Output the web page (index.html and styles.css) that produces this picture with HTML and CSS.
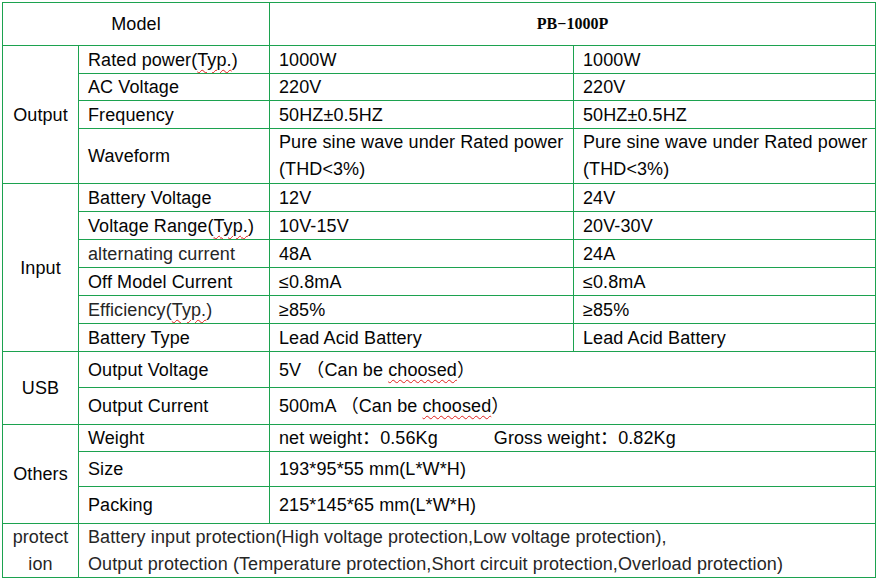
FILE: index.html
```html
<!DOCTYPE html>
<html lang="en">
<head>
<meta charset="utf-8">
<title>PB-1000P specification</title>
<link rel="stylesheet" href="styles.css">
</head>
<body>
<div class="spec">
  <div class="c span2 center"><span>Model</span></div>
  <div class="c span2 center model"><span>PB−1000P</span></div>

  <div class="c grp r4"><span>Output</span></div>
  <div class="c"><span>Rated power(<span class="sp">Typ.</span>)</span></div>
  <div class="c"><span>1000W</span></div>
  <div class="c"><span>1000W</span></div>
  <div class="c"><span>AC Voltage</span></div>
  <div class="c"><span>220V</span></div>
  <div class="c"><span>220V</span></div>
  <div class="c"><span>Frequency</span></div>
  <div class="c"><span>50HZ±0.5HZ</span></div>
  <div class="c"><span>50HZ±0.5HZ</span></div>
  <div class="c"><span>Waveform</span></div>
  <div class="c multi"><span>Pure sine wave under Rated power<br>(THD&lt;3%)</span></div>
  <div class="c multi"><span>Pure sine wave under Rated power<br>(THD&lt;3%)</span></div>

  <div class="c grp r6"><span>Input</span></div>
  <div class="c"><span>Battery Voltage</span></div>
  <div class="c"><span>12V</span></div>
  <div class="c"><span>24V</span></div>
  <div class="c"><span>Voltage Range(<span class="sp">Typ.</span>)</span></div>
  <div class="c"><span>10V-15V</span></div>
  <div class="c"><span>20V-30V</span></div>
  <div class="c soft"><span>alternating current</span></div>
  <div class="c"><span>48A</span></div>
  <div class="c"><span>24A</span></div>
  <div class="c"><span>Off Model Current</span></div>
  <div class="c"><span>≤0.8mA</span></div>
  <div class="c"><span>≤0.8mA</span></div>
  <div class="c soft"><span>Efficiency(<span class="sp">Typ.</span>)</span></div>
  <div class="c"><span>≥85%</span></div>
  <div class="c"><span>≥85%</span></div>
  <div class="c"><span>Battery Type</span></div>
  <div class="c"><span>Lead Acid Battery</span></div>
  <div class="c"><span>Lead Acid Battery</span></div>

  <div class="c grp r2"><span>USB</span></div>
  <div class="c"><span>Output Voltage</span></div>
  <div class="c span2"><span>5V （Can be <span class="sp">choosed</span>）</span></div>
  <div class="c"><span>Output Current</span></div>
  <div class="c span2"><span>500mA （Can be <span class="sp">choosed</span>）</span></div>

  <div class="c grp r3"><span>Others</span></div>
  <div class="c"><span>Weight</span></div>
  <div class="c span2"><span>net weight：0.56Kg</span><span class="gross">Gross weight：0.82Kg</span></div>
  <div class="c"><span>Size</span></div>
  <div class="c span2"><span>193*95*55 mm(L*W*H)</span></div>
  <div class="c"><span>Packing</span></div>
  <div class="c span2"><span>215*145*65 mm(L*W*H)</span></div>

  <div class="c grp multi soft"><span>protect<br>ion</span></div>
  <div class="c span3 multi soft"><span>Battery input protection(High voltage protection,Low voltage protection),<br>Output protection (Temperature protection,Short circuit protection,Overload protection)</span></div>
</div>
</body>
</html>
```

FILE: styles.css
```css
html, body {
  margin: 0;
  padding: 0;
  background: #ffffff;
}

body {
  font-family: "Liberation Sans", Arial, "Noto Sans CJK SC", sans-serif;
  font-size: 18px;
  letter-spacing: 0.1px;
  color: #050505;
}

.spec {
  display: grid;
  width: 874px;
  box-sizing: border-box;
  margin: 2px 0 0 2px;
  padding: 1px;
  gap: 1px;
  background: #1ca24f;
  grid-template-columns: 75px 190px 303px 301px;
  grid-template-rows: 42px 27px 26px 27px 54px 27px 27px 27px 27px 27px 27px 35px 36px 26px 34px 36px 53px;
}

.c {
  background: #ffffff;
  display: flex;
  align-items: center;
  padding: 0 0 0 9px;
  white-space: nowrap;
  line-height: 20px;
}

.center {
  justify-content: center;
  padding: 0;
}

.span2 { grid-column: span 2; }
.span3 { grid-column: span 3; }

.grp {
  justify-content: center;
  text-align: center;
  padding: 0;
}

.r2 { grid-row: span 2; }
.r3 { grid-row: span 3; }
.r4 { grid-row: span 4; }
.r6 { grid-row: span 6; }

.multi {
  line-height: 27px;
}

.soft {
  color: #262626;
}

.model {
  font-family: "Liberation Serif", "Times New Roman", serif;
  font-weight: bold;
  font-size: 16px;
  letter-spacing: 0;
}

.sp {
  text-decoration: underline wavy #e0201c;
  text-decoration-thickness: 1px;
  text-underline-offset: 3px;
}

.gross {
  margin-left: 56px;
}
```
